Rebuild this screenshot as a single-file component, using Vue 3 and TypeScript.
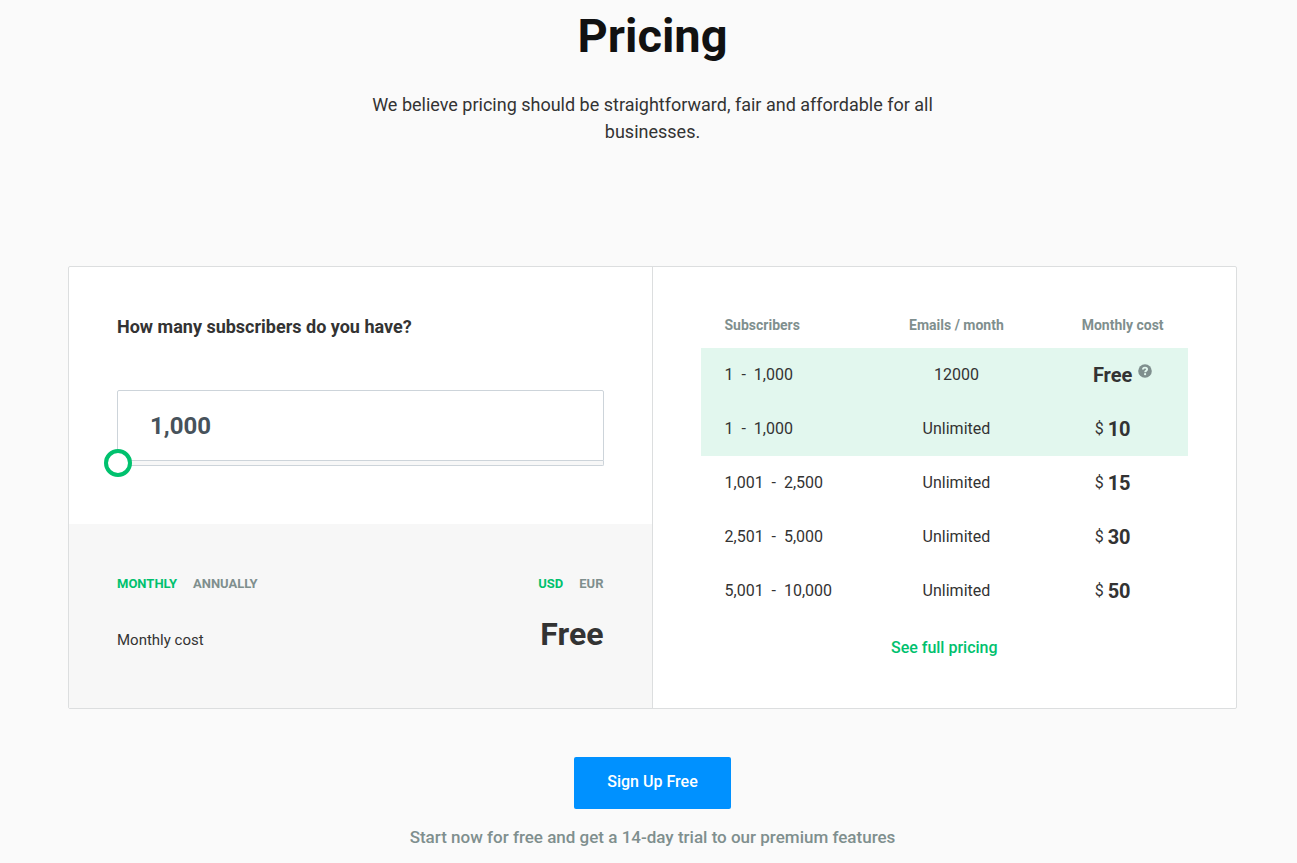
<script setup lang="ts">
import { computed, ref } from 'vue'

type Period = 'monthly' | 'annually'
type Currency = 'USD' | 'EUR'

interface Plan {
  range: string
  emails: string
  cost: number
}

const plans: Plan[] = [
  { range: '1 \u00a0-\u00a0 1,000', emails: '12000', cost: 0 },
  { range: '1 \u00a0-\u00a0 1,000', emails: 'Unlimited', cost: 10 },
  { range: '1,001 \u00a0-\u00a0 2,500', emails: 'Unlimited', cost: 15 },
  { range: '2,501 \u00a0-\u00a0 5,000', emails: 'Unlimited', cost: 30 },
  { range: '5,001 \u00a0-\u00a0 10,000', emails: 'Unlimited', cost: 50 },
]
const limits = [1000, 2500, 5000, 10000]
const costs = [0, 15, 30, 50]

const periods: Period[] = ['monthly', 'annually']
const currencies: Currency[] = ['USD', 'EUR']

const step = ref(0)
const period = ref<Period>('monthly')
const currency = ref<Currency>('USD')

const symbol = computed(() => (currency.value === 'USD' ? '$' : '€'))
const subscribers = computed(() => limits[step.value].toLocaleString('en-US'))
const total = computed(() => {
  const cost = costs[step.value]
  return cost === 0 ? 'Free' : `${symbol.value} ${cost}`
})

function isActive(index: number): boolean {
  return step.value === 0 ? index < 2 : index === step.value + 1
}
</script>

<template>
  <main class="page">
    <header class="intro">
      <h1>Pricing</h1>
      <p>We believe pricing should be straightforward, fair and affordable for all businesses.</p>
    </header>

    <section class="card">
      <div class="calculator">
        <div class="question">
          <label class="question-label" for="subscribers">How many subscribers do you have?</label>
          <div class="picker">
            <input id="subscribers" class="count" type="text" :value="subscribers" readonly />
            <div class="track"></div>
            <input
              v-model.number="step"
              class="slider"
              type="range"
              min="0"
              max="3"
              aria-label="Number of subscribers"
            />
          </div>
        </div>
        <div class="summary">
          <div class="row">
            <div class="toggle">
              <button
                v-for="p in periods"
                :key="p"
                type="button"
                :class="{ on: p === period }"
                @click="period = p"
              >{{ p }}</button>
            </div>
            <div class="toggle">
              <button
                v-for="c in currencies"
                :key="c"
                type="button"
                :class="{ on: c === currency }"
                @click="currency = c"
              >{{ c }}</button>
            </div>
          </div>
          <div class="row total">
            <span>Monthly cost</span>
            <strong>{{ total }}</strong>
          </div>
        </div>
      </div>

      <div class="plans">
        <table>
          <colgroup>
            <col class="col-range" />
            <col class="col-emails" />
            <col class="col-cost" />
          </colgroup>
          <thead>
            <tr>
              <th scope="col">Subscribers</th>
              <th scope="col">Emails / month</th>
              <th scope="col">Monthly cost</th>
            </tr>
          </thead>
          <tbody>
            <tr v-for="(plan, i) in plans" :key="i" :class="{ active: isActive(i) }">
              <td>{{ plan.range }}</td>
              <td>{{ plan.emails }}</td>
              <td>
                <div v-if="plan.cost === 0" class="price">
                  <strong>Free</strong>
                  <button class="help" type="button" aria-label="About the free plan">
                    <svg viewBox="0 0 14 14" width="14" height="14" aria-hidden="true">
                      <circle cx="7" cy="7" r="6.8" fill="#7f8f8e" />
                      <path
                        d="M4.9 5.5C5 4.2 5.9 3.6 7 3.6c1.2 0 2.1.7 2.1 1.7 0 1.5-1.9 1.4-1.9 2.9"
                        fill="none"
                        stroke="#e2f7ee"
                        stroke-width="1.9"
                      />
                      <circle cx="7.1" cy="10.2" r="1.1" fill="#e2f7ee" />
                    </svg>
                  </button>
                </div>
                <div v-else class="price paid">
                  <span>{{ symbol }}</span>
                  <strong>{{ plan.cost }}</strong>
                </div>
              </td>
            </tr>
          </tbody>
        </table>
        <a class="full" href="#full-pricing">See full pricing</a>
      </div>
    </section>

    <footer class="signup">
      <a class="cta" href="#signup">Sign Up Free</a>
      <p>Start now for free and get a 14-day trial to our premium features</p>
    </footer>
  </main>
</template>

<style>
body {
  background: #fafafa;
}
</style>

<style scoped>
.page {
  padding: 8px 60px 12px 68px;
  color: #333;
  font-family: Roboto, "Open Sans", sans-serif;
  font-size: 16px;
  line-height: 24px;
}

.page *,
.page {
  box-sizing: border-box;
}

button,
input {
  margin: 0;
  padding: 0;
  border: 0;
  background: none;
  font: inherit;
}

button {
  cursor: pointer;
}

.intro {
  max-width: 584px;
  margin: 0 auto 121px;
  text-align: center;
}

h1 {
  margin: 0 0 27px;
  color: #111;
  font-size: 47px;
  font-weight: 700;
  line-height: 56px;
}

.intro p {
  margin: 0;
  font-size: 18px;
  line-height: 27px;
}

.card {
  display: grid;
  grid-template-columns: 1fr 1fr;
  border: 1px solid #dcdedf;
  border-radius: 2px;
  background: #fff;
}

.calculator {
  display: flex;
  flex-direction: column;
  border-right: 1px solid #dcdedf;
}

.question {
  padding: 48px 48px 58px;
}

.question-label {
  display: block;
  margin-bottom: 51px;
  font-size: 18px;
  font-weight: 700;
}

.picker {
  position: relative;
}

.count {
  display: block;
  width: 100%;
  height: 71px;
  padding: 0 32px;
  border: 1px solid #cdd4da;
  border-radius: 2px 2px 0 0;
  background: #fff;
  color: #47525b;
  font-size: 24px;
  font-weight: 700;
}

.track {
  height: 5px;
  border: 1px solid #cdd4da;
  border-top: 0;
  border-radius: 0 0 2px 2px;
  background: #f7f7f7;
}

/* The slider runs half a thumb past both ends of the track. */
.slider {
  position: absolute;
  bottom: -11px;
  left: -13px;
  width: calc(100% + 26px);
  height: 28px;
  appearance: none;
}

.slider::-webkit-slider-thumb {
  width: 28px;
  height: 28px;
  border: 4px solid #00c16e;
  border-radius: 50%;
  background: #fff;
  appearance: none;
  cursor: pointer;
}

.summary {
  flex: 1;
  padding: 48px;
  background: #f7f7f7;
}

.row {
  display: flex;
  align-items: baseline;
  justify-content: space-between;
}

.toggle {
  display: flex;
  gap: 16px;
}

.toggle button {
  color: #7f8f8e;
  font-size: 13px;
  font-weight: 700;
  line-height: 24px;
  text-transform: uppercase;
}

.toggle .on {
  color: #00c16e;
}

.total {
  margin-top: 14px;
}

.total span {
  font-size: 15px;
}

.total strong {
  font-size: 32px;
  line-height: 48px;
}

.plans {
  padding: 34px 48px 48px;
  text-align: center;
}

table {
  width: 100%;
  border-collapse: collapse;
  table-layout: fixed;
}

.col-range {
  width: 31%;
}

.col-emails {
  width: 43%;
}

.col-cost {
  width: 26%;
}

th,
td {
  height: 54px;
  padding: 0;
  white-space: nowrap;
}

th {
  height: 47px;
  color: #7f8f8e;
  font-size: 14px;
  font-weight: 700;
}

th:first-child,
td:first-child {
  padding-left: 24px;
  text-align: left;
}

th:last-child,
td:last-child {
  padding-right: 4px;
}

.active {
  background: #e2f7ee;
}

.price {
  display: flex;
  justify-content: center;
  gap: 6px;
}

.paid {
  gap: 4px;
  padding-right: 20px;
}

.price strong {
  font-size: 20px;
}

.help {
  display: block;
  height: 14px;
  margin-top: 1px;
}

.help svg {
  display: block;
}

.full {
  display: inline-block;
  margin-top: 18px;
  color: #00c16e;
  font-weight: 500;
  text-decoration: none;
}

.signup {
  margin-top: 48px;
  text-align: center;
}

.cta {
  display: inline-block;
  padding: 13px 33px 15px;
  border-radius: 2px;
  background: #0091ff;
  color: #fff;
  font-weight: 500;
  text-decoration: none;
}

.signup p {
  margin: 16px 0 0;
  color: #7f8f8e;
  font-size: 17px;
  font-weight: 500;
}
</style>
